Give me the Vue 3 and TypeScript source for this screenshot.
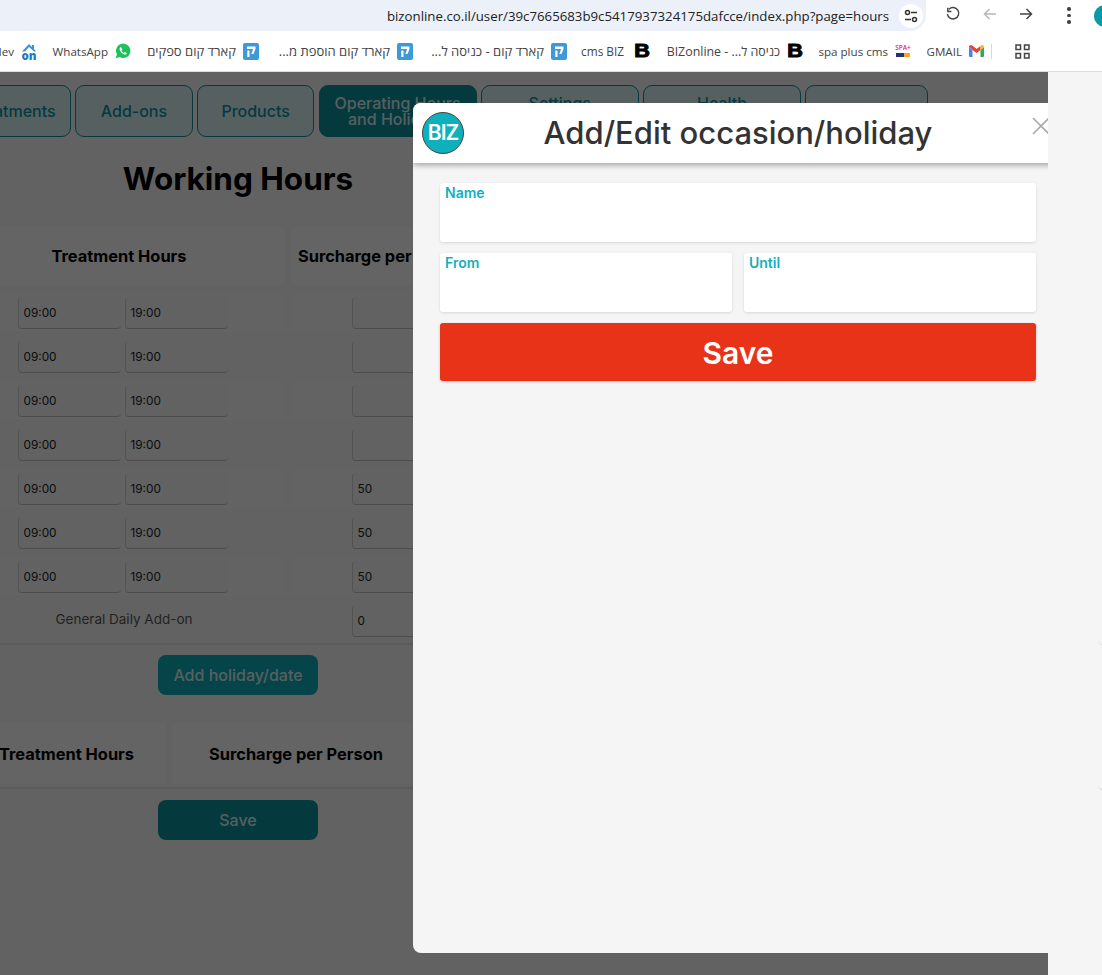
<script setup lang="ts">
const url = 'bizonline.co.il/user/39c7665683b9c5417937324175dafcce/index.php?page=hours'

type Mark = { label: string; width: number; icon: string; size?: string }
const marks: Mark[] = [
  { label: 'dev', width: 30, icon: 'on' },
  { label: 'WhatsApp', width: 55, icon: 'wa' },
  { label: 'קארד קום ספקים', width: 89, icon: 'k', size: 'he' },
  { label: 'קארד קום הוספת מ...', width: 115, icon: 'k', size: 'he' },
  { label: 'קארד קום - כניסה ל...', width: 115, icon: 'k', size: 'he' },
  { label: 'cms BIZ', width: 44, icon: 'b', size: 'tail' },
  { label: 'כניסה ל... - BIZonline', width: 114, icon: 'b', size: 'mid' },
  { label: 'spa plus cms', width: 69, icon: 'spa' },
  { label: 'GMAIL', width: 35, icon: 'm' }
]

const tabs = [
  { label: 'Treatments', width: 117.5 },
  { label: 'Add-ons', width: 117.5 },
  { label: 'Products', width: 117.5 },
  { label: 'Operating Hours and Holidays', width: 158, active: true },
  { label: 'Settings', width: 158, raised: true },
  { label: 'Health', width: 158, raised: true },
  { label: '', width: 123 }
]

const rows = [
  { from: '09:00', to: '19:00', fee: '' },
  { from: '09:00', to: '19:00', fee: '' },
  { from: '09:00', to: '19:00', fee: '' },
  { from: '09:00', to: '19:00', fee: '' },
  { from: '09:00', to: '19:00', fee: '50' },
  { from: '09:00', to: '19:00', fee: '50' },
  { from: '09:00', to: '19:00', fee: '50' }
]
</script>

<template>
  <div class="screen">
    <header class="chrome">
      <div class="toolbar">
        <div class="address">
          <span class="url">{{ url }}</span>
          <span class="site-info">
            <svg width="18" height="18" viewBox="0 0 18 18" fill="none" stroke="#333" stroke-width="1.5">
              <circle cx="5.5" cy="5.5" r="2" />
              <path d="M9 5.5h6M3 12.5h6" />
              <circle cx="12.5" cy="12.5" r="2" />
            </svg>
          </span>
        </div>
        <div class="tools">
          <svg class="tool reload" width="16" height="16" viewBox="0 0 16 16" fill="none" stroke="#444" stroke-width="1.5">
            <path d="M4 3.200A5.700 5.700 0 1 1 2.400 8" />
            <path d="M2.800 1.800v3.600h3.600" />
          </svg>
          <svg class="tool back" width="16" height="16" viewBox="0 0 16 16" fill="none" stroke="#b4b7bb" stroke-width="1.5">
            <path d="M14 8H2.500M7.500 3 2.500 8l5 5" />
          </svg>
          <svg class="tool forward" width="16" height="16" viewBox="0 0 16 16" fill="none" stroke="#444" stroke-width="1.5">
            <path d="M2 8h11.500M8.500 3l5 5-5 5" />
          </svg>
          <span class="dots"><i></i><i></i><i></i></span>
          <span class="avatar"></span>
        </div>
      </div>
      <nav class="bookmarks">
        <div v-for="m in marks" :key="m.label" class="mark">
          <span class="mark-label" :class="m.size" :style="{ width: m.width + 'px' }">{{ m.label }}</span>
          <svg v-if="m.icon === 'on'" width="16" height="19" viewBox="0 0 16 19">
            <path d="M1 9.500 8 2l3 3V3h2v4l2 2.500h-2L8 5 4 9.500z" fill="#3a93d6" />
            <text x="8" y="18" text-anchor="middle" font-family="Open Sans" font-size="11.500" font-weight="800" fill="#1b7cc4">on</text>
          </svg>
          <svg v-else-if="m.icon === 'wa'" width="16" height="16" viewBox="0 0 16 16">
            <path d="M.8 15.200l1.100-3.900A7.200 7.200 0 1 1 4.700 14.100z" fill="#1fc25a" />
            <path d="M5.300 4.200c-.9.700-1 2.100 0 3.800 1 1.700 2.500 3 4.200 3.500 1.100.3 2-.3 2.300-1.300l-2-1.100-.9.900c-1-.4-1.900-1.300-2.400-2.500l.8-.8-.9-2.300z" fill="#fff" />
          </svg>
          <svg v-else-if="m.icon === 'k'" width="16" height="17" viewBox="0 0 16 17">
            <rect width="16" height="17" rx="2" fill="#3d9ad9" />
            <path d="M4 3.500h8.500v2.500L10.500 11H8.300l1.800-5H4zM4.300 7.500h2.200V14H4.300z" fill="#fff" />
          </svg>
          <span v-else-if="m.icon === 'b'" class="b-icon">B</span>
          <svg v-else-if="m.icon === 'spa'" width="16" height="16" viewBox="0 0 16 16">
            <text x="8" y="7" text-anchor="middle" font-family="Open Sans" font-size="6.500" font-weight="600" fill="#e0218a">SPA+</text>
            <rect x="1" y="10" width="8" height="4" fill="#27307f" />
            <rect x="9" y="10" width="6" height="4" fill="#f5a623" />
          </svg>
          <svg v-else width="15" height="12" viewBox="0 0 15 12">
            <path d="M0 2v9a1 1 0 0 0 1 1h2.500V5z" fill="#4285f4" />
            <path d="M15 2v9a1 1 0 0 1-1 1h-2.500V5z" fill="#34a853" />
            <path d="M0 2c0-1.700 1.800-2.500 3-1.500l4.500 3.500v3.500L0 2z" fill="#ea4335" />
            <path d="M3.500 1 7.500 4l4-3v4l-4 3-4-3z" fill="#ea4335" />
            <path d="M15 2c0-1.700-1.800-2.500-3-1.500l-.5.500v4z" fill="#fbbc04" />
          </svg>
        </div>
        <span class="divider"></span>
        <svg class="apps" width="15" height="15" viewBox="0 0 15 15" fill="none" stroke="#444" stroke-width="1.500">
          <rect x="1" y="1" width="4.500" height="4.500" />
          <rect x="9.500" y="1" width="4.500" height="4.500" />
          <rect x="1" y="9.500" width="4.500" height="4.500" />
          <rect x="9.500" y="9.500" width="4.500" height="4.500" />
        </svg>
      </nav>
    </header>

    <div class="viewport">
      <main class="page">
        <div class="tabs">
          <button
            v-for="t in tabs"
            :key="t.label"
            class="tab"
            :class="{ active: t.active, raised: t.raised }"
            :style="{ width: t.width + 'px' }"
          >{{ t.label }}</button>
        </div>

        <h1 class="heading">Working Hours</h1>

        <section class="hours">
          <div class="head-row">
            <div class="head-cell">Treatment Hours</div>
            <div class="head-cell">Surcharge per Person</div>
          </div>
          <div v-for="(r, i) in rows" :key="i" class="row" :class="{ odd: i % 2 === 0 }">
            <div class="times">
              <span class="field">{{ r.from }}</span>
              <span class="field">{{ r.to }}</span>
            </div>
            <div class="fee"><span class="field fee-field">{{ r.fee }}</span></div>
          </div>
          <div class="row total">
            <div class="general">General Daily Add-on</div>
            <div class="fee"><span class="field fee-field">0</span></div>
          </div>
        </section>

        <button class="action add">Add holiday/date</button>

        <section class="dates">
          <div class="head-cell">Treatment Hours</div>
          <div class="head-cell">Surcharge per Person</div>
        </section>

        <button class="action save">Save</button>
      </main>

      <div class="overlay"></div>

      <aside class="modal">
        <div class="modal-head">
          <span class="logo">BIZ</span>
          <h2 class="modal-title">Add/Edit occasion/holiday</h2>
          <svg class="close" width="18" height="18" viewBox="0 0 18 18" stroke="#aaa" stroke-width="1.600" fill="none">
            <path d="M1 1l16 16M17 1 1 17" />
          </svg>
        </div>
        <form class="form" @submit.prevent>
          <label class="input-box"><span>Name</span></label>
          <div class="pair">
            <label class="input-box"><span>From</span></label>
            <label class="input-box"><span>Until</span></label>
          </div>
          <button class="submit">Save</button>
        </form>
      </aside>
    </div>

    <i class="edge-mark first"></i>
    <i class="edge-mark second"></i>
  </div>
</template>

<style>
html, body { margin: 0; background: #f5f5f5; }
</style>

<style scoped>
.screen {
  position: relative;
  width: 1102px;
  height: 975px;
  overflow: hidden;
  background: #f5f5f5;
  font-family: Inter, "Open Sans", sans-serif;
  display: flex;
  flex-direction: column;
}

/* browser chrome */
.chrome { background: #fff; font-family: "Open Sans", "Liberation Sans", sans-serif; flex: none; }
.toolbar { height: 31px; display: flex; align-items: flex-start; }
.address {
  width: 926px;
  height: 31px;
  flex: none;
  background: #ebf0f9;
  border-radius: 0 0 16px 0;
  display: flex;
  justify-content: flex-end;
  align-items: center;
  padding-right: 3px;
  box-sizing: border-box;
  gap: 10px;
}
.url { font-size: 13.25px; color: #222; white-space: nowrap; }
.site-info {
  width: 24px;
  height: 24px;
  border-radius: 50%;
  background: #fff;
  display: flex;
  align-items: center;
  justify-content: center;
}
.tools { position: relative; flex: 1; height: 31px; }
.tool { position: absolute; top: 6px; }
.reload { left: 19px; }
.back { left: 56px; }
.forward { left: 92px; }
.dots { position: absolute; left: 141px; top: 7px; display: flex; flex-direction: column; gap: 3px; }
.dots i { width: 3.500px; height: 3.500px; border-radius: 50%; background: #444; display: block; }
.avatar { position: absolute; left: 168px; top: 5px; width: 22px; height: 22px; border-radius: 50%; background: #0a9aa5; }

.bookmarks {
  height: 40px;
  border-bottom: 1px solid #dadce0;
  display: flex;
  align-items: center;
  gap: 16px;
  margin-left: -16px;
}
.mark { display: flex; align-items: center; gap: 7px; flex: none; }
.mark-label { font-size: 11.6px; color: #444; white-space: nowrap; text-align: right; direction: rtl; box-sizing: border-box; }
.mark-label.he { font-size: 13px; }
.mark-label.mid { font-size: 12.4px; }
.mark-label.tail { font-size: 11.800px; padding-right: 3px; }
.b-icon {
  width: 16px;
  height: 17px;
  color: #000;
  font: 900 18px/17px "Liberation Sans", sans-serif;
  -webkit-text-stroke: 1px #000;
  text-align: center;
  display: inline-block;
  transform: scaleX(1.2);
}
.divider { width: 1px; height: 15px; background: #c9daf0; margin-left: -9px; }
.apps { margin-left: 7px; flex: none; }

/* page under the dialog */
.viewport { position: relative; width: 1048px; flex: 1; overflow: hidden; background: #f5f5f5; }
.page { width: 476px; display: flex; flex-direction: column; align-items: center; }
.tabs { display: flex; gap: 4.200px; margin-top: 13px; align-self: flex-start; margin-left: -46.500px; width: max-content; }
.tab {
  height: 52px;
  box-sizing: border-box;
  border: 1px solid #0a919b;
  border-radius: 9px;
  background: #d7f0f2;
  color: #0a919b;
  font: 500 16px/16px Inter, sans-serif;
  padding: 0 8px;
  overflow: hidden;
  flex: none;
}
.tab.active { background: #0a919b; color: rgba(255, 255, 255, 0.85); }
.tab.raised { padding-bottom: 16px; }
.heading { margin: 23px 0 0; font: 700 31.500px/38px Inter, sans-serif; color: #000; text-align: center; }

.hours { align-self: flex-start; margin-top: 28px; margin-left: -47px; width: 523px; }
.head-row { display: grid; grid-template-columns: 332px 1fr; gap: 6px; height: 60px; }
.head-cell {
  background: #fafafa;
  display: flex;
  align-items: center;
  justify-content: center;
  font-weight: 700;
  font-size: 16.400px;
  color: #000;
  white-space: nowrap;
  overflow: hidden;
}
.head-row .head-cell:last-child { justify-content: flex-start; padding-left: 7px; }
.row { display: grid; grid-template-columns: 332px 1fr; gap: 6px; height: 44px; align-items: center; }
.head-row + .row { margin-top: 5px; }
.row.odd .times, .row.odd .fee { background: #f8f8f8; }
.times { display: flex; gap: 4px; padding-left: 65px; height: 38px; align-items: center; }
.fee { height: 38px; display: flex; align-items: center; padding-left: 61px; }
.field {
  width: 103px;
  height: 32px;
  box-sizing: border-box;
  padding-left: 4.500px;
  display: flex;
  align-items: center;
  font-size: 11.800px;
  color: #222;
  border-left: 1px solid #d0d0d0;
  border-bottom: 1px solid #bdbdbd;
  border-radius: 4px;
  background: #f5f5f5;
  flex: none;
}
.fee-field { width: 80px; }
.general { font-size: 13.500px; color: #555; text-align: center; padding: 0 0 4px 10px; }
.row.total { border-bottom: 2px solid #e4e4e4; }

.action {
  width: 160px;
  height: 40px;
  border: 0;
  border-radius: 8px;
  color: rgba(255, 255, 255, 0.85);
  font: 500 16px/40px Inter, sans-serif;
  flex: none;
  padding: 0;
}
.action.add { margin-top: 10px; background: #0eaab4; }
.dates {
  align-self: flex-start;
  margin-top: 28px;
  margin-left: -33px;
  display: grid;
  grid-template-columns: 199px 248px;
  gap: 6px;
  height: 61px;
  padding-bottom: 3px;
  border-bottom: 2px solid #e4e4e4;
}
.action.save { margin-top: 11px; background: #0a919b; }

.overlay { position: absolute; inset: 0; background: rgba(0, 0, 0, 0.6); }

.modal {
  position: absolute;
  left: 413px;
  top: 31px;
  width: 650px;
  height: 850px;
  background: #f5f5f5;
  border-radius: 8px;
  overflow: hidden;
}
.modal-head {
  position: relative;
  height: 60px;
  background: #fff;
  box-shadow: 0 2px 6px rgba(0, 0, 0, 0.35);
  display: flex;
  align-items: center;
  justify-content: center;
}
.logo {
  position: absolute;
  left: 9px;
  top: 9px;
  width: 42px;
  height: 42px;
  box-sizing: border-box;
  border: 1px solid #444;
  border-radius: 50%;
  background: #0db0bb;
  color: #fff;
  font: 600 21px/40px Inter, sans-serif;
  letter-spacing: -1px;
  text-align: center;
}
.modal-title { margin: 0; font: 500 31px/60px Inter, sans-serif; color: #333; white-space: nowrap; }
.close { position: absolute; left: 619px; top: 14px; }
.form { padding: 20px 27px 0; display: flex; flex-direction: column; gap: 11px; }
.pair { display: grid; grid-template-columns: 1fr 1fr; gap: 12px; }
.input-box {
  display: block;
  height: 59px;
  box-sizing: border-box;
  background: #fff;
  border-radius: 3px;
  box-shadow: 0 1px 3px rgba(0, 0, 0, 0.12);
  padding: 1px 5px;
  font: 600 14px/17px Inter, sans-serif;
  color: #13b0bb;
}
.submit {
  height: 58px;
  border: 0;
  border-radius: 3px;
  background: #e93318;
  color: #fff;
  font: 600 30px/58px Inter, sans-serif;
  box-shadow: 0 1px 3px rgba(0, 0, 0, 0.2);
}
.edge-mark {
  position: absolute;
  left: 1098px;
  width: 6px;
  height: 4px;
  border-bottom: 1px solid #ddd;
  border-radius: 0 0 0 6px;
}
.edge-mark.first { top: 640px; }
.edge-mark.second { top: 785px; }
</style>
